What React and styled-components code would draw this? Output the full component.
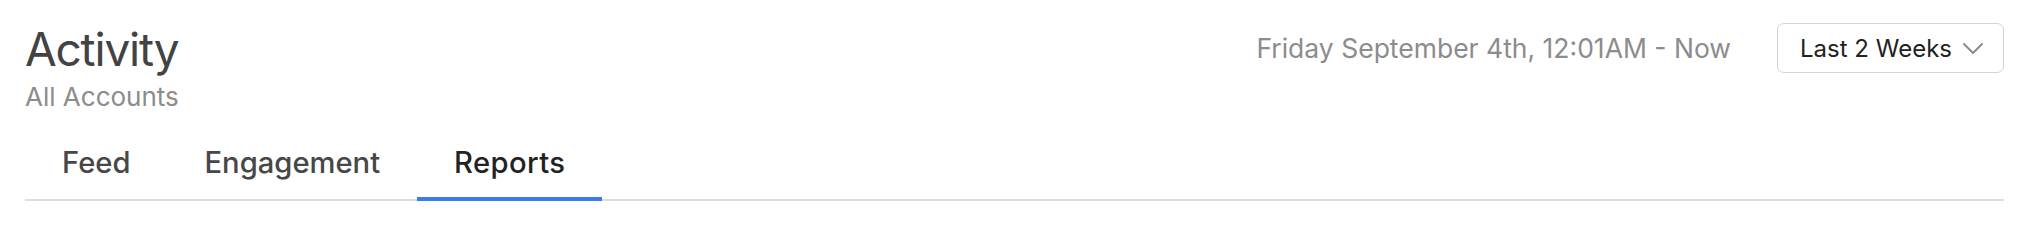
import React, { useState } from 'react';
import styled, { createGlobalStyle } from 'styled-components';

const GlobalStyle = createGlobalStyle`
  body {
    margin: 0;
    background: #fff;
    font-family: Inter, "Noto Sans", sans-serif;
  }
`;

const Header = styled.div`
  padding: 0 24px 0 25px;
`;

const TopRow = styled.div`
  display: flex;
  justify-content: space-between;
  align-items: flex-start;
`;

const TitleBlock = styled.div`
  padding-top: 21px;
`;

const Title = styled.h1`
  margin: 0;
  font-size: 46px;
  line-height: 56px;
  font-weight: 400;
  color: #434343;
  letter-spacing: -1.2px;
`;

const Subtitle = styled.div`
  font-size: 26px;
  line-height: 30px;
  color: #8c8c8c;
  margin-top: 5px;
`;

const Controls = styled.div`
  display: flex;
  align-items: center;
  gap: 46px;
  padding-top: 23px;
`;

const DateRange = styled.span`
  font-size: 26.5px;
  color: #8c8c8c;
`;

const RangeButton = styled.button`
  display: flex;
  align-items: center;
  gap: 11px;
  height: 50px;
  padding: 0 20px 0 22px;
  border: 1px solid #d4d4d4;
  border-radius: 7px;
  background: #fff;
  font-family: inherit;
  font-size: 24px;
  color: #222;
  cursor: pointer;
`;

const Tabs = styled.div`
  display: flex;
  margin-top: 33px;
  border-bottom: 2px solid #dedede;
`;

const Tab = styled.button`
  padding: 0 37px 16px;
  margin-bottom: -2px;
  border: none;
  border-bottom: 4px solid ${(p) => (p.active ? '#3a7cf0' : 'transparent')};
  background: none;
  font-family: inherit;
  font-size: 29.2px;
  line-height: 36px;
  font-weight: 500;
  color: ${(p) => (p.active ? '#222' : '#474747')};
  letter-spacing: ${(p) => (p.active ? '0.4px' : '0')};
  cursor: pointer;
`;

const Chevron = () => (
  <svg width="20" height="11" viewBox="0 0 20 11" fill="none">
    <path d="M1 1l9 9 9-9" stroke="#888" strokeWidth="1.8" strokeLinecap="round" strokeLinejoin="round" />
  </svg>
);

const tabs = ['Feed', 'Engagement', 'Reports'];

function App() {
  const [active, setActive] = useState('Reports');

  return (
    <>
      <GlobalStyle />
      <Header>
        <TopRow>
          <TitleBlock>
            <Title>Activity</Title>
            <Subtitle>All Accounts</Subtitle>
          </TitleBlock>
          <Controls>
            <DateRange>Friday September 4th, 12:01AM - Now</DateRange>
            <RangeButton>
              Last 2 Weeks
              <Chevron />
            </RangeButton>
          </Controls>
        </TopRow>
        <Tabs>
          {tabs.map((t) => (
            <Tab key={t} active={t === active} onClick={() => setActive(t)}>
              {t}
            </Tab>
          ))}
        </Tabs>
      </Header>
    </>
  );
}

export default App;
